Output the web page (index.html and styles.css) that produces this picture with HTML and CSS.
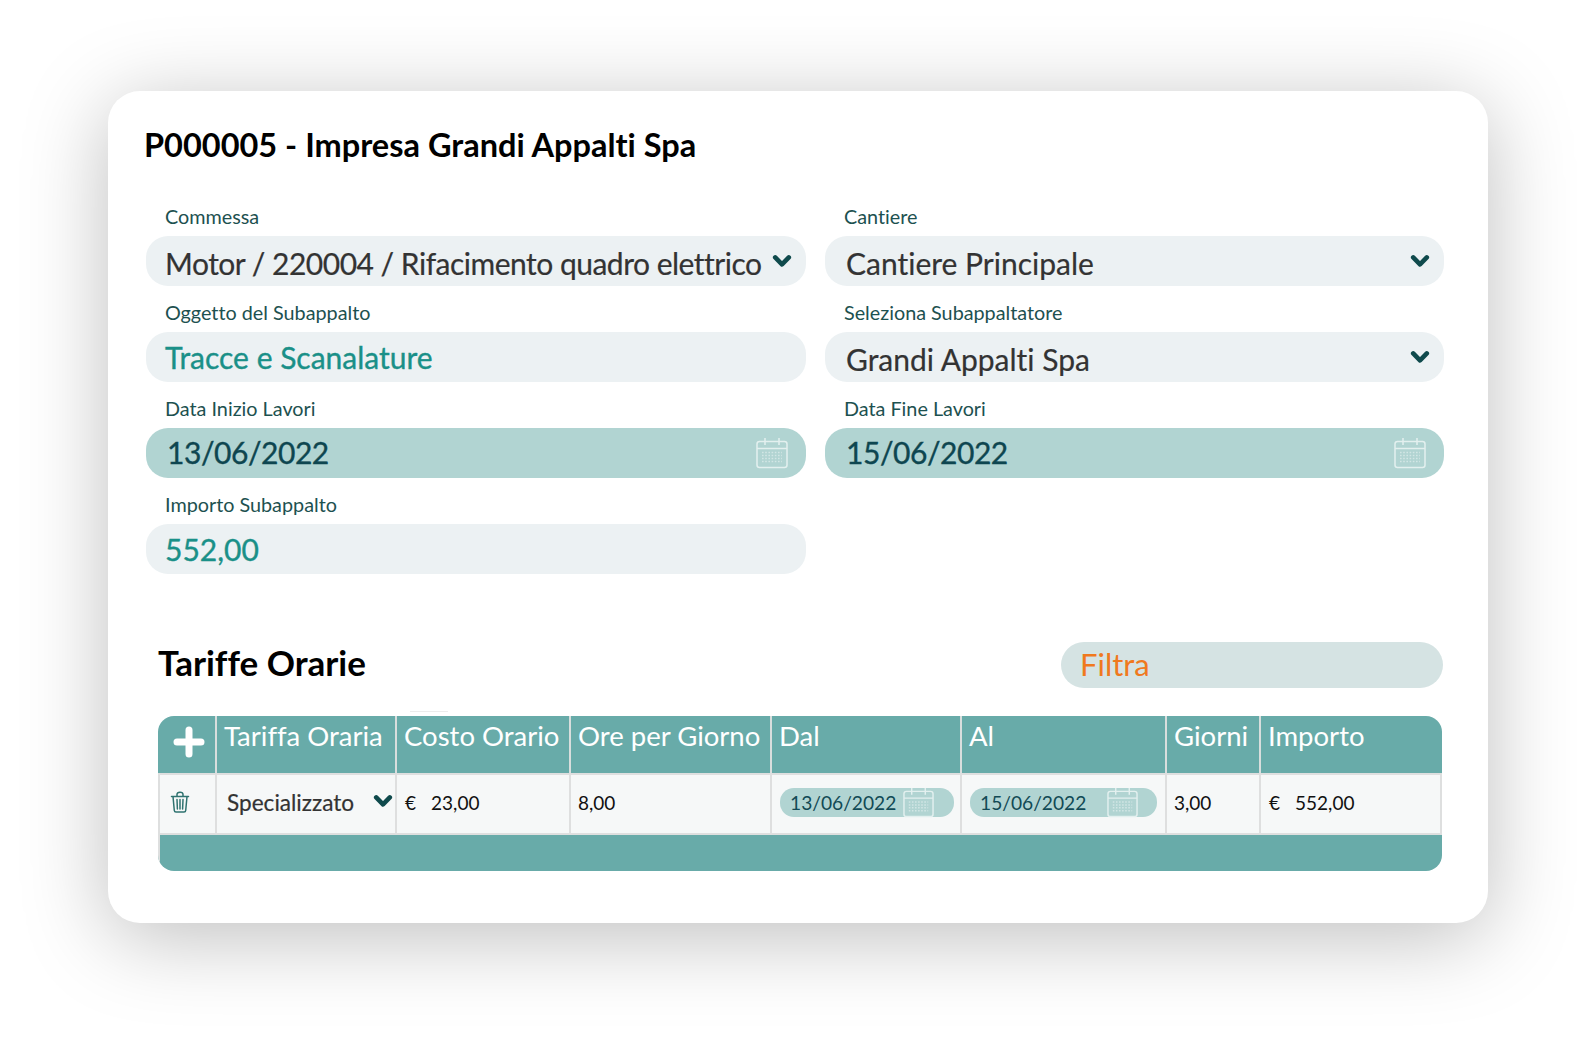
FILE: index.html
```html
<!DOCTYPE html>
<html lang="it">
<head>
<meta charset="utf-8">
<title>Subappalto</title>
<link rel="stylesheet" href="styles.css">
</head>
<body>
<svg class="defs" width="0" height="0" aria-hidden="true">
  <symbol id="cal" viewBox="0 0 32 32">
    <rect x="1" y="4.5" width="30" height="26" rx="2.5" fill="none" stroke="currentColor" stroke-width="1.5"/>
    <path d="M1 11.5h30M9 1v7M23 1v7" fill="none" stroke="currentColor" stroke-width="1.5"/>
    <path d="M6 15.5h20M6 18.5h20M6 21.5h20M6 24.5h20" fill="none" stroke="currentColor" stroke-width="1.6" stroke-dasharray="1.6 1.6" opacity=".65"/>
  </symbol>
  <symbol id="chev" viewBox="0 0 20 14">
    <path d="M3.200 3.400l6.800 7 6.800-7" fill="none" stroke="currentColor" stroke-width="4.600" stroke-linecap="round" stroke-linejoin="round"/>
  </symbol>
</svg>
<main class="card">
  <h1 class="title">P000005 - Impresa Grandi Appalti Spa</h1>
  <div class="form">
    <div class="field">
      <label class="lbl">Commessa</label>
      <div class="box"><span class="val val-dark val-tight">Motor / 220004 / Rifacimento quadro elettrico</span><svg class="chev"><use href="#chev"/></svg></div>
    </div>
    <div class="field">
      <label class="lbl">Cantiere</label>
      <div class="box box-wide"><span class="val val-dark">Cantiere Principale</span><svg class="chev"><use href="#chev"/></svg></div>
    </div>
    <div class="field">
      <label class="lbl">Oggetto del Subappalto</label>
      <div class="box"><span class="val val-teal">Tracce e Scanalature</span></div>
    </div>
    <div class="field">
      <label class="lbl">Seleziona Subappaltatore</label>
      <div class="box box-wide"><span class="val val-dark">Grandi Appalti Spa</span><svg class="chev"><use href="#chev"/></svg></div>
    </div>
    <div class="field">
      <label class="lbl">Data Inizio Lavori</label>
      <div class="box box-date"><span class="val val-date">13/06/2022</span><svg class="cal"><use href="#cal"/></svg></div>
    </div>
    <div class="field">
      <label class="lbl">Data Fine Lavori</label>
      <div class="box box-date"><span class="val val-date">15/06/2022</span><svg class="cal"><use href="#cal"/></svg></div>
    </div>
    <div class="field">
      <label class="lbl">Importo Subappalto</label>
      <div class="box"><span class="val val-teal">552,00</span></div>
    </div>
  </div>
  <div class="section-head">
    <h2 class="section-title">Tariffe Orarie</h2>
    <div class="filter">Filtra</div>
  </div>
  <div class="tick"></div>
  <div class="table-wrap">
    <table class="rates">
      <colgroup>
        <col class="c1"><col class="c2"><col class="c3"><col class="c4"><col class="c5"><col class="c6"><col class="c7"><col class="c8">
      </colgroup>
      <thead>
        <tr>
          <th class="th-add"><svg class="plus" viewBox="0 0 32 32"><path d="M16 4v24M4 16h24" fill="none" stroke="currentColor" stroke-width="7" stroke-linecap="round"/></svg></th>
          <th>Tariffa Oraria</th>
          <th>Costo Orario</th>
          <th>Ore per Giorno</th>
          <th>Dal</th>
          <th>Al</th>
          <th>Giorni</th>
          <th>Importo</th>
        </tr>
      </thead>
      <tbody>
        <tr>
          <td class="td-del"><svg class="trash" viewBox="0 0 20 22"><path d="M1.500 5.500h17M7 5.200V3.400C7 2 8 1.200 10 1.200s3 .8 3 2.200v1.800M3 5.500l1.300 14c.1 1 .8 1.500 1.700 1.500h8c.9 0 1.600-.5 1.700-1.500l1.300-14M7 8.500l.4 9.500M10 8.500V18M13 8.500l-.4 9.500" fill="none" stroke="currentColor" stroke-width="1.500" stroke-linecap="round"/></svg></td>
          <td class="td-sel"><div class="sel"><span class="sel-text">Specializzato</span><svg class="chev-sm"><use href="#chev"/></svg></div></td>
          <td class="td-mon"><span class="money"><span>€</span><span>23,00</span></span></td>
          <td class="td-num">8,00</td>
          <td class="td-date"><div class="pill pill-a"><span>13/06/2022</span><svg class="cal-sm"><use href="#cal"/></svg></div></td>
          <td class="td-date"><div class="pill pill-b"><span>15/06/2022</span><svg class="cal-sm"><use href="#cal"/></svg></div></td>
          <td class="td-num">3,00</td>
          <td class="td-mon"><span class="money"><span>€</span><span>552,00</span></span></td>
        </tr>
      </tbody>
      <tfoot>
        <tr><td class="foot" colspan="8"></td></tr>
      </tfoot>
    </table>
  </div>
</main>
</body>
</html>
```
FILE: styles.css
```css
* { box-sizing: border-box; }
html, body { margin: 0; padding: 0; background: #fff; }
body { width: 1596px; height: 1049px; overflow: hidden; font-family: "Lato", "Liberation Sans", sans-serif; font-variant-ligatures: none; }
.defs { position: absolute; }

.card {
  position: relative;
  width: 1380px;
  height: 832px;
  margin: 91px 0 0 108px;
  padding: 35px 45px 0 38px;
  background: #fff;
  border-radius: 32px;
  box-shadow: 0 14px 85px rgba(0, 0, 0, .26);
}

.title { margin: 0 0 34px -2px; font-size: 32.500px; line-height: 38px; font-weight: 700; color: #000; white-space: nowrap; }

.form { display: grid; grid-template-columns: 660px 619px; column-gap: 19px; height: 388px; grid-auto-rows: 96px; }
.field { display: flex; flex-direction: column; }
.lbl { height: 38px; padding: 5px 0 0 19px; font-size: 19.800px; line-height: 27px; color: #1d5150; }

.box { display: flex; align-items: center; justify-content: space-between; height: 50px; padding: 0 14px 0 19px; background: #ecf1f3; border-radius: 22px; }
.box-wide { padding-left: 21px; }
.box-date { background: #b1d4d2; padding-left: 21px; padding-right: 18px; }

.val { font-size: 30px; line-height: 46px; white-space: nowrap; }
.val-dark { color: #333; padding-top: 4px; -webkit-text-stroke: .2px #333; }
.val-tight { letter-spacing: -.5px; }
.val-teal { color: #1a9088; -webkit-text-stroke: .35px #1a9088; }
.val-date { color: #0e4650; letter-spacing: -.45px; padding-bottom: 2px; -webkit-text-stroke: .35px #0e4650; }

.chev { width: 20px; height: 14px; color: #0f4a4c; }
.cal { width: 32px; height: 32px; color: #e3f0ef; }

.section-head { display: flex; justify-content: space-between; align-items: center; height: 46px; margin-top: 56px; padding-left: 12px; }
.section-title { margin: 0; padding-bottom: 5px; font-size: 35px; line-height: 41px; font-weight: 700; color: #000; white-space: nowrap; }
.filter { width: 382px; height: 46px; padding-left: 19px; font-size: 31px; line-height: 45px; color: #f0791e; background: #d5e3e3; border-radius: 23px; }

.tick { position: absolute; left: 302px; top: 620px; width: 38px; height: 1px; background: #ececec; }

.table-wrap { width: 1284px; margin: 28px 0 0 12px; border-radius: 16px; overflow: hidden; }
.rates { width: 1284px; table-layout: fixed; border-collapse: separate; border-spacing: 0; }
.c1 { width: 59px; } .c2 { width: 180px; } .c3 { width: 174px; } .c4 { width: 201px; }
.c5 { width: 190px; } .c6 { width: 205px; } .c7 { width: 94px; } .c8 { width: 181px; }

.rates th {
  height: 57px;
  padding: 4px 0 0 7px;
  vertical-align: top;
  text-align: left;
  font-size: 27.500px;
  line-height: 32px;
  font-weight: 400;
  color: #fff;
  background: #68aba9;
  border-right: 2px solid #d9dedd;
  white-space: nowrap;
}
.rates th:last-child { border-right: 0; }
.rates .th-add { padding: 10px 0 0 15px; }
.plus { display: block; width: 32px; height: 32px; color: #fff; }

.rates td {
  height: 62px;
  padding: 0 0 0 8px;
  font-size: 19px;
  color: #111;
  background: #f6f8f8;
  border-top: 2px solid #dedfdf;
  border-bottom: 2px solid #dedfdf;
  border-right: 2px solid #dedfdf;
}
.rates td:first-child { border-left: 2px solid #dedfdf; }
.rates .td-del { padding: 0 0 4px 10px; }
.trash { display: block; width: 20px; height: 22px; color: #2f7370; }
.rates .td-sel { padding: 0 2px 4px 10px; }
.rates .td-num { padding: 0 0 4px 7px; }
.rates .td-mon { padding-bottom: 2px; }
.rates .td-date { padding-bottom: 4px; }
.sel { display: flex; justify-content: space-between; align-items: center; }
.sel-text { font-size: 22.600px; color: #333; -webkit-text-stroke: .2px #333; }
.chev-sm { width: 20px; height: 14px; color: #0f4a4c; margin-bottom: 3px; }

.money { display: inline-flex; gap: 15px; padding-bottom: 2px; }

.pill { display: flex; align-items: center; justify-content: space-between; height: 29px; padding: 0 20px 0 10px; font-size: 19.200px; line-height: 27px; color: #124a55; background: #b1d4d2; border-radius: 14px; }
.pill-a { width: 174px; }
.pill-b { width: 187px; padding-right: 19px; }
.cal-sm { width: 31px; height: 31px; color: #e3f0ef; }

.rates .foot { height: 36px; padding: 0; background: #68aba9; border: 0; }
```
